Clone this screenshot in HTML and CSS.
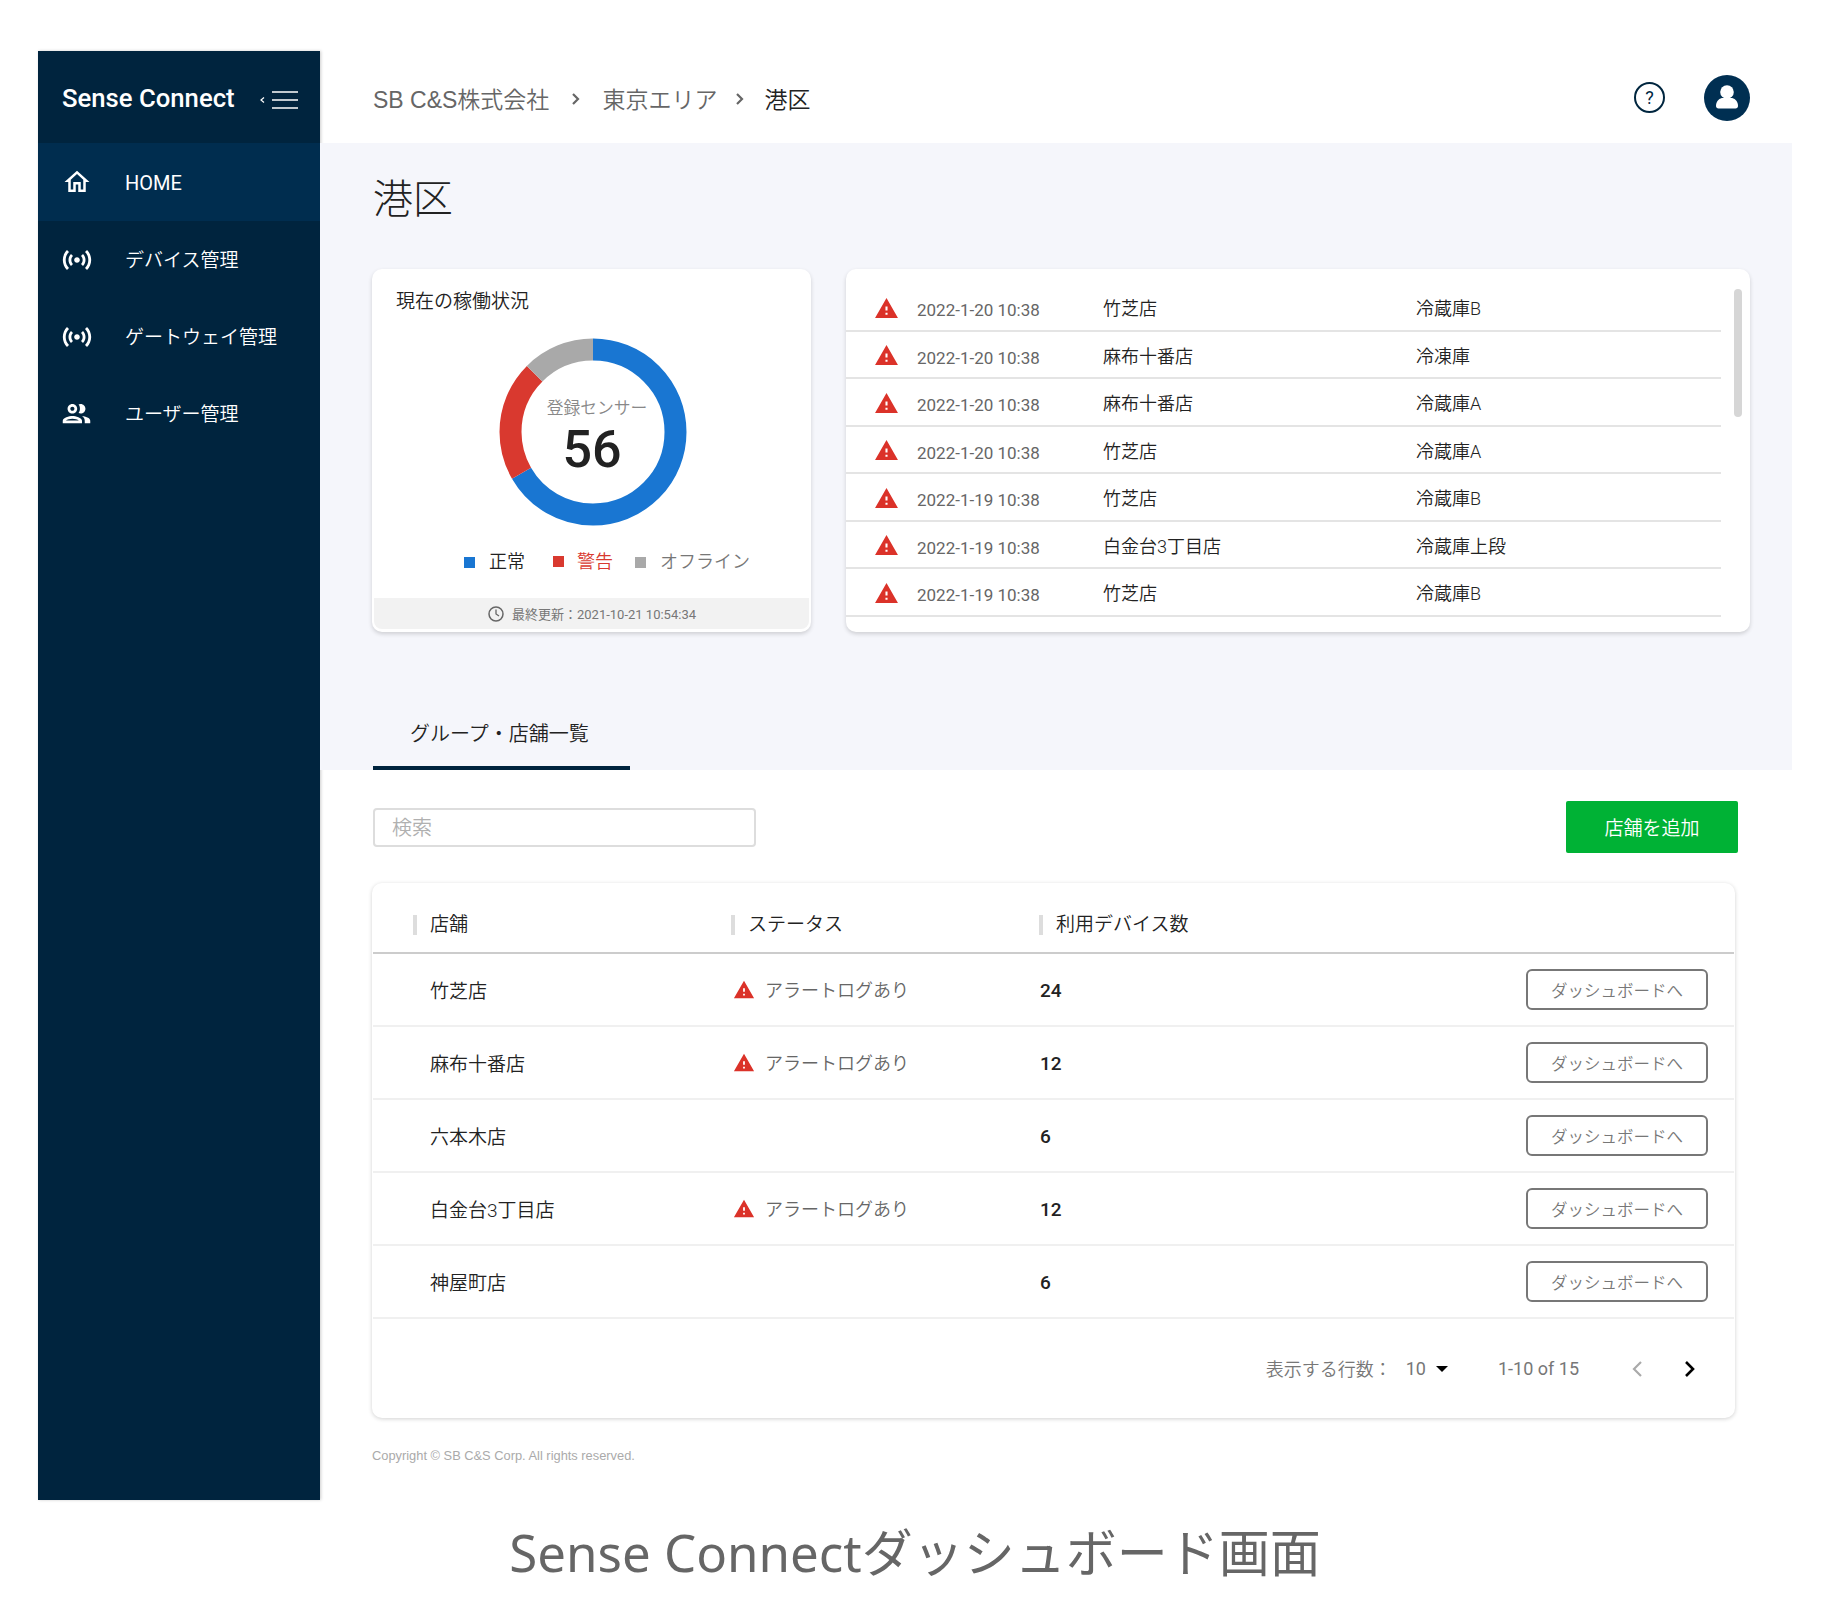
FILE: index.html
```html
<!DOCTYPE html>
<html lang="ja">

<head>
    <meta charset="UTF-8">
    <title>Sense Connect</title>
    <link rel="stylesheet" href="styles.css">
</head>

<body>
    <svg class="defs" width="0" height="0">
        <symbol id="warning" viewBox="0 0 24 24"><path d="M1 21h22L12 2 1 21zm12-3h-2v-2h2v2zm0-4h-2v-4h2v4z"/></symbol>
        <symbol id="sensors" viewBox="0 0 24 24"><path d="M7.76 16.24C6.67 15.16 6 13.66 6 12s.67-3.16 1.76-4.24l1.42 1.42C8.45 9.9 8 10.9 8 12c0 1.1.45 2.1 1.17 2.83l-1.41 1.41zm8.48 0C17.33 15.16 18 13.66 18 12s-.67-3.16-1.76-4.24l-1.42 1.42C15.55 9.9 16 10.9 16 12c0 1.1-.45 2.1-1.17 2.83l1.41 1.41zM12 10c-1.1 0-2 .9-2 2s.9 2 2 2 2-.9 2-2-.9-2-2-2zm8 2c0 2.21-.9 4.21-2.35 5.65l1.42 1.42C20.88 17.26 22 14.76 22 12s-1.12-5.26-2.93-7.07l-1.42 1.42C19.1 7.79 20 9.79 20 12zM6.35 6.35L4.93 4.93C3.12 6.74 2 9.24 2 12s1.12 5.26 2.93 7.07l1.42-1.42C4.9 16.21 4 14.21 4 12s.9-4.21 2.35-5.65z"/></symbol>
    </svg>

    <div class="app">
        <aside class="sidebar">
            <div class="brand">
                <span class="brand-name">Sense Connect</span>
                <svg class="brand-toggle" width="40" height="18" viewBox="0 0 40 18">
                    <path d="M5 6.5 2 9l3 2.500" fill="none" stroke="#fff" stroke-width="1.200"/>
                    <path d="M13 1h26M13 9h26M13 17h26" stroke="#fff" stroke-width="1.500"/>
                </svg>
            </div>
            <nav>
                <a class="nav-item active">
                    <span class="nav-icon"><svg width="30" height="30" viewBox="0 0 24 24"><path d="M12 5.690l5 4.500V18h-2v-6H9v6H7v-7.810l5-4.500M12 3L2 12h3v8h6v-6h2v6h6v-8h3L12 3z"/></svg></span>
                    <span class="nav-label">HOME</span>
                </a>
                <a class="nav-item">
                    <span class="nav-icon"><svg width="34" height="34"><use href="#sensors"/></svg></span>
                    <span class="nav-label">デバイス管理</span>
                </a>
                <a class="nav-item">
                    <span class="nav-icon"><svg width="34" height="34"><use href="#sensors"/></svg></span>
                    <span class="nav-label">ゲートウェイ管理</span>
                </a>
                <a class="nav-item">
                    <span class="nav-icon"><svg width="33" height="33" viewBox="0 0 24 24"><path d="M9 13.750c-2.340 0-7 1.170-7 3.500V19h14v-1.750c0-2.330-4.660-3.500-7-3.500zM4.340 17c.84-.58 2.870-1.250 4.660-1.250s3.820.67 4.660 1.250H4.340zM9 12c1.930 0 3.500-1.570 3.500-3.500S10.930 5 9 5 5.500 6.570 5.500 8.500 7.070 12 9 12zm0-5c.83 0 1.500.67 1.500 1.500S9.830 10 9 10s-1.500-.67-1.500-1.500S8.170 7 9 7zm7.040 6.810c1.160.84 1.960 1.960 1.960 3.440V19h4v-1.750c0-2.020-3.500-3.170-5.960-3.440zM15 12c1.930 0 3.500-1.570 3.500-3.500S16.930 5 15 5c-.54 0-1.040.13-1.500.35.63.89 1 1.980 1 3.150s-.37 2.260-1 3.150c.46.22.96.35 1.500.35z"/></svg></span>
                    <span class="nav-label">ユーザー管理</span>
                </a>
            </nav>
        </aside>

        <div class="main">
            <header class="topbar">
                <div class="crumbs">
                    <span>SB C&amp;S株式会社</span>
                    <svg class="crumb-sep sep-first" width="10" height="14" viewBox="0 0 10 14"><path d="M2 2l5 5-5 5" fill="none" stroke="#666" stroke-width="2.200"/></svg>
                    <span>東京エリア</span>
                    <svg class="crumb-sep sep-second" width="10" height="14" viewBox="0 0 10 14"><path d="M2 2l5 5-5 5" fill="none" stroke="#666" stroke-width="2.200"/></svg>
                    <span class="crumb-current">港区</span>
                </div>
                <div class="top-actions">
                    <span class="help">?</span>
                    <span class="avatar">
                        <svg width="46" height="46" viewBox="0 0 46 46"><circle cx="23" cy="17" r="6.800" fill="#fff"/><path d="M12 31c0-5.500 4-8 7-8h8c3 0 7 2.500 7 8 0 1.500-1 2.500-2.500 2.500h-17C13 33.500 12 32.500 12 31z" fill="#fff"/></svg>
                    </span>
                </div>
            </header>

            <section class="overview">
                <h1 class="page-title">港区</h1>
                <div class="cards">
                    <div class="card status-card">
                        <h2 class="card-title">現在の稼働状況</h2>
                        <div class="donut">
                            <svg width="188" height="188" viewBox="0 0 188 188">
                                <g fill="none" stroke-width="22" transform="rotate(-90 94 94)">
                                    <circle cx="94" cy="94" r="82.500" pathLength="360" stroke="#1976d2" stroke-dasharray="240 360"/>
                                    <circle cx="94" cy="94" r="82.500" pathLength="360" stroke="#d9392f" stroke-dasharray="75 360" stroke-dashoffset="-240"/>
                                    <circle cx="94" cy="94" r="82.500" pathLength="360" stroke="#a9a9a9" stroke-dasharray="45 360" stroke-dashoffset="-315"/>
                                </g>
                            </svg>
                            <div class="donut-label">
                                <span class="donut-caption">登録センサー</span>
                                <span class="donut-count">56</span>
                            </div>
                        </div>
                        <div class="legend">
                            <span class="legend-item"><i class="swatch swatch-blue"></i>正常</span>
                            <span class="legend-item legend-red"><i class="swatch swatch-red"></i>警告</span>
                            <span class="legend-item legend-gray"><i class="swatch swatch-gray"></i>オフライン</span>
                        </div>
                        <div class="card-foot">
                            <svg width="18" height="18" viewBox="0 0 18 18"><circle cx="9" cy="9" r="7" fill="none" stroke="#666" stroke-width="1.500"/><path d="M9 4.500V9l3 2" fill="none" stroke="#666" stroke-width="1.300"/></svg>
                            <span>最終更新：2021-10-21 10:54:34</span>
                        </div>
                    </div>

                    <div class="card alert-card">
                        <div class="alert-row">
                            <svg class="warn" width="25" height="25"><use href="#warning"/></svg>
                            <span class="alert-date">2022-1-20 10:38</span><span>竹芝店</span><span>冷蔵庫B</span>
                        </div>
                        <div class="alert-row">
                            <svg class="warn" width="25" height="25"><use href="#warning"/></svg>
                            <span class="alert-date">2022-1-20 10:38</span><span>麻布十番店</span><span>冷凍庫</span>
                        </div>
                        <div class="alert-row">
                            <svg class="warn" width="25" height="25"><use href="#warning"/></svg>
                            <span class="alert-date">2022-1-20 10:38</span><span>麻布十番店</span><span>冷蔵庫A</span>
                        </div>
                        <div class="alert-row">
                            <svg class="warn" width="25" height="25"><use href="#warning"/></svg>
                            <span class="alert-date">2022-1-20 10:38</span><span>竹芝店</span><span>冷蔵庫A</span>
                        </div>
                        <div class="alert-row">
                            <svg class="warn" width="25" height="25"><use href="#warning"/></svg>
                            <span class="alert-date">2022-1-19 10:38</span><span>竹芝店</span><span>冷蔵庫B</span>
                        </div>
                        <div class="alert-row">
                            <svg class="warn" width="25" height="25"><use href="#warning"/></svg>
                            <span class="alert-date">2022-1-19 10:38</span><span>白金台3丁目店</span><span>冷蔵庫上段</span>
                        </div>
                        <div class="alert-row">
                            <svg class="warn" width="25" height="25"><use href="#warning"/></svg>
                            <span class="alert-date">2022-1-19 10:38</span><span>竹芝店</span><span>冷蔵庫B</span>
                        </div>
                        <div class="scroll-thumb"></div>
                    </div>
                </div>
                <div class="tab">グループ・店舗一覧</div>
            </section>

            <section class="content">
                <div class="toolbar">
                    <div class="search">検索</div>
                    <button class="add-btn">店舗を追加</button>
                </div>

                <div class="store-card">
                    <div class="store-head">
                        <span class="head-cell">店舗</span>
                        <span class="head-cell">ステータス</span>
                        <span class="head-cell">利用デバイス数</span>
                    </div>
                    <div class="store-row">
                        <span class="store-name">竹芝店</span>
                        <span class="store-status"><svg class="warn" width="22" height="22"><use href="#warning"/></svg><span class="status-text">アラートログあり</span></span>
                        <span class="store-count">24</span>
                        <button class="dash-btn">ダッシュボードへ</button>
                    </div>
                    <div class="store-row">
                        <span class="store-name">麻布十番店</span>
                        <span class="store-status"><svg class="warn" width="22" height="22"><use href="#warning"/></svg><span class="status-text">アラートログあり</span></span>
                        <span class="store-count">12</span>
                        <button class="dash-btn">ダッシュボードへ</button>
                    </div>
                    <div class="store-row">
                        <span class="store-name">六本木店</span>
                        <span class="store-status"></span>
                        <span class="store-count">6</span>
                        <button class="dash-btn">ダッシュボードへ</button>
                    </div>
                    <div class="store-row">
                        <span class="store-name">白金台3丁目店</span>
                        <span class="store-status"><svg class="warn" width="22" height="22"><use href="#warning"/></svg><span class="status-text">アラートログあり</span></span>
                        <span class="store-count">12</span>
                        <button class="dash-btn">ダッシュボードへ</button>
                    </div>
                    <div class="store-row">
                        <span class="store-name">神屋町店</span>
                        <span class="store-status"></span>
                        <span class="store-count">6</span>
                        <button class="dash-btn">ダッシュボードへ</button>
                    </div>
                    <div class="pager">
                        <span class="pager-label">表示する行数：</span>
                        <span class="pager-size">10</span>
                        <i class="caret"></i>
                        <span class="pager-range">1-10 of 15</span>
                        <svg class="pager-prev" width="12" height="18" viewBox="0 0 12 18"><path d="M10 2 3 9l7 7" fill="none" stroke="#aaa" stroke-width="2.200"/></svg>
                        <svg class="pager-next" width="12" height="18" viewBox="0 0 12 18"><path d="M2 2l7 7-7 7" fill="none" stroke="#000" stroke-width="2.600"/></svg>
                    </div>
                </div>
                <p class="copyright">Copyright © SB C&amp;S Corp. All rights reserved.</p>
            </section>
        </div>
    </div>

    <p class="caption">Sense Connectダッシュボード画面</p>
</body>

</html>
```

FILE: styles.css
```css
* {
    box-sizing: border-box;
}

body {
    margin: 0;
    padding: 51px 38px 0;
    width: 1830px;
    background-color: white;
    color: #222;
    font-family: Roboto, "Noto Sans CJK JP", sans-serif;
    font-weight: 350;
}

.defs {
    position: absolute;
}

.app {
    display: flex;
    width: 1754px;
    height: 1449px;
}

/* sidebar */
.sidebar {
    width: 282px;
    flex-shrink: 0;
    background-color: #00243e;
    color: white;
    box-shadow: 1px 0 3px rgba(0, 0, 0, 0.2);
}

.brand {
    height: 92px;
    padding: 2px 21px 0 24px;
    display: flex;
    align-items: center;
    justify-content: space-between;
}

.brand-name {
    font-size: 25.700px;
    font-weight: 500;
}

.brand-toggle {
    margin-top: 4px;
}

.nav-item {
    height: 77px;
    display: flex;
    align-items: center;
    font-size: 19px;
    fill: white;
}

.nav-item.active {
    height: 78px;
    background-color: #002d4f;
    font-size: 20px;
    font-weight: 400;
}

.nav-icon {
    width: 87px;
    padding-right: 10px;
    display: flex;
    justify-content: center;
}

.nav-label {
    margin-top: -2px;
}

.active .nav-label {
    margin-top: 2px;
}

/* header */
.main {
    flex: 1;
    display: flex;
    flex-direction: column;
}

.topbar {
    height: 92px;
    padding: 4px 42px 0 53px;
    display: flex;
    align-items: center;
    justify-content: space-between;
}

.crumbs {
    display: flex;
    align-items: center;
    margin-top: -2px;
    font-family: "Liberation Sans", "Noto Sans CJK JP", sans-serif;
    font-size: 23px;
    color: #666;
}

.crumb-sep {
    margin: 2px 0 0;
}

.sep-first {
    margin-left: 22px;
    margin-right: 21px;
}

.sep-second {
    margin-left: 18px;
    margin-right: 19px;
}

.crumb-current {
    color: #222;
}

.top-actions {
    display: flex;
    align-items: center;
    gap: 39px;
    margin-top: -3px;
}

.help {
    width: 31px;
    height: 31px;
    border: 2px solid #00263f;
    border-radius: 50%;
    display: flex;
    align-items: center;
    justify-content: center;
    font-size: 18px;
    font-weight: 400;
    color: #00263f;
}

.avatar {
    width: 46px;
    height: 46px;
    border-radius: 50%;
    background-color: #002f52;
    display: block;
}

/* overview */
.overview {
    height: 627px;
    padding: 0 35px 0 52px;
    background-color: #f5f6fb;
    display: flex;
    flex-direction: column;
}

.page-title {
    height: 126px;
    margin: 0 0 0 1px;
    padding-top: 27px;
    font-size: 40px;
    font-weight: 300;
    line-height: 60px;
}

.cards {
    display: flex;
    gap: 35px;
}

.card {
    height: 363px;
    background-color: white;
    border-radius: 10px;
    box-shadow: 0 2px 4px rgba(0, 0, 0, 0.16);
}

.status-card {
    width: 439px;
    padding: 3px 2px;
    display: flex;
    flex-direction: column;
}

.card-title {
    margin: 16px 0 0 22px;
    font-size: 19px;
    font-weight: 350;
    line-height: 28px;
}

.donut {
    position: relative;
    width: 188px;
    height: 188px;
    margin: 22px 0 0 125px;
}

.donut-label {
    position: absolute;
    inset: 0;
    display: flex;
    flex-direction: column;
    align-items: center;
}

.donut-caption {
    margin: 57px 0 0 8px;
    font-size: 16.800px;
    line-height: 26px;
    color: #888;
}

.donut-count {
    margin-right: 2px;
    font-size: 52px;
    font-weight: 500;
    line-height: 58px;
}

.legend {
    margin: 23px 0 0 90px;
    display: flex;
    font-size: 18px;
    line-height: 26px;
}

.legend-item {
    display: flex;
    align-items: center;
    margin-right: 28px;
}

.legend-item:nth-child(2) {
    margin-right: 22px;
}

.legend-red {
    color: #d9392f;
}

.legend-gray {
    color: #777;
}

.swatch {
    width: 11px;
    height: 11px;
    margin-right: 14px;
}

.swatch-blue {
    background-color: #1976d2;
}

.swatch-red {
    background-color: #d9392f;
    margin-top: -2px;
    margin-right: 13px;
}

.swatch-gray {
    background-color: #a9a9a9;
}

.card-foot {
    height: 31px;
    margin-top: auto;
    background-color: #f2f2f2;
    border-radius: 0 0 8px 8px;
    display: flex;
    align-items: center;
    justify-content: center;
    gap: 7px;
    font-size: 13px;
    font-weight: 400;
    color: #777;
}

.alert-card {
    width: 904px;
    padding-top: 15px;
    position: relative;
}

.alert-row {
    width: 875px;
    height: 47.500px;
    padding: 1px 0 0 28px;
    border-bottom: 2px solid #e4e4e4;
    display: grid;
    grid-template-columns: 43px 186px 313px 1fr;
    align-items: center;
    font-size: 18px;
}

.alert-row .warn {
    margin-top: 2px;
}

.alert-date {
    padding-top: 6px;
    font-size: 17px;
    font-weight: 400;
    color: #666;
}

.warn {
    fill: #db3229;
    display: block;
}

.scroll-thumb {
    position: absolute;
    top: 20px;
    right: 8px;
    width: 8px;
    height: 128px;
    border-radius: 4px;
    background-color: #d6d6d6;
}

.tab {
    width: 257px;
    height: 70px;
    margin: auto 0 0 1px;
    padding: 19px 0 0 37px;
    border-bottom: 4px solid #00243e;
    font-size: 20px;
    line-height: 30px;
}

/* store table */
.content {
    flex: 1;
    padding: 31px 54px 0 52px;
}

.toolbar {
    display: flex;
    align-items: center;
    justify-content: space-between;
    padding-left: 1px;
}

.search {
    width: 383px;
    height: 39px;
    padding-left: 17px;
    border: 2px solid #ddd;
    border-radius: 4px;
    font-size: 20px;
    line-height: 36px;
    color: #b0b0b0;
}

.add-btn {
    width: 172px;
    height: 52px;
    padding: 0 0 2px;
    border: none;
    border-radius: 2px;
    background-color: #00b235;
    color: white;
    font-family: inherit;
    font-weight: inherit;
    font-size: 19px;
}

.store-card {
    width: 1363px;
    height: 535px;
    margin-top: 30px;
    padding: 0 1px;
    background-color: white;
    border-radius: 10px;
    box-shadow: 0 1px 4px rgba(0, 0, 0, 0.18);
}

.store-head,
.store-row {
    padding: 0 26px 0 40px;
    display: grid;
    grid-template-columns: 318px 308px 1fr auto;
    align-items: center;
}

.store-head {
    height: 71px;
    padding-top: 14px;
    border-bottom: 2px solid #ccc;
}

.head-cell {
    padding-left: 13px;
    border-left: 4px solid #ddd;
    font-size: 19px;
    line-height: 20px;
}

.store-row {
    height: 73px;
    border-bottom: 2px solid #f0f0f0;
}

.store-name {
    padding-left: 17px;
    font-size: 19px;
}

.store-status {
    padding-left: 2px;
    display: flex;
    align-items: center;
    gap: 10px;
    font-size: 18px;
    color: #666;
}

.status-text {
    margin-top: -2px;
}

.store-count {
    margin-top: 2px;
    padding-left: 1px;
    font-size: 19px;
    font-weight: 500;
}

.dash-btn {
    width: 182px;
    height: 41px;
    padding: 0;
    border: 2px solid #777;
    border-radius: 6px;
    background-color: white;
    font-family: inherit;
    font-weight: inherit;
    font-size: 16.500px;
    color: #777;
}

.pager {
    height: 99px;
    padding-right: 38px;
    display: flex;
    align-items: center;
    justify-content: flex-end;
    font-size: 18px;
    font-weight: 400;
    color: #777;
}

.pager-label {
    margin-top: -2px;
    font-weight: 350;
}

.pager-size {
    margin-left: 14px;
}

.caret {
    width: 0;
    height: 0;
    margin-left: 10px;
    border-left: 6px solid transparent;
    border-right: 6px solid transparent;
    border-top: 6px solid #000;
}

.pager-range {
    margin-left: 50px;
}

.pager-prev {
    margin-left: 52px;
}

.pager-next {
    margin-left: 41px;
}

.copyright {
    margin: 30px 0 0;
    font-family: "Liberation Sans", sans-serif;
    font-size: 12.850px;
    font-weight: 400;
    line-height: 16px;
    color: #aaa;
}

.caption {
    margin: 2px 0 0;
    text-align: center;
    font-family: "Noto Sans", "Noto Sans CJK JP", sans-serif;
    font-size: 51px;
    font-weight: 400;
    line-height: 100px;
    color: #666;
}
```
